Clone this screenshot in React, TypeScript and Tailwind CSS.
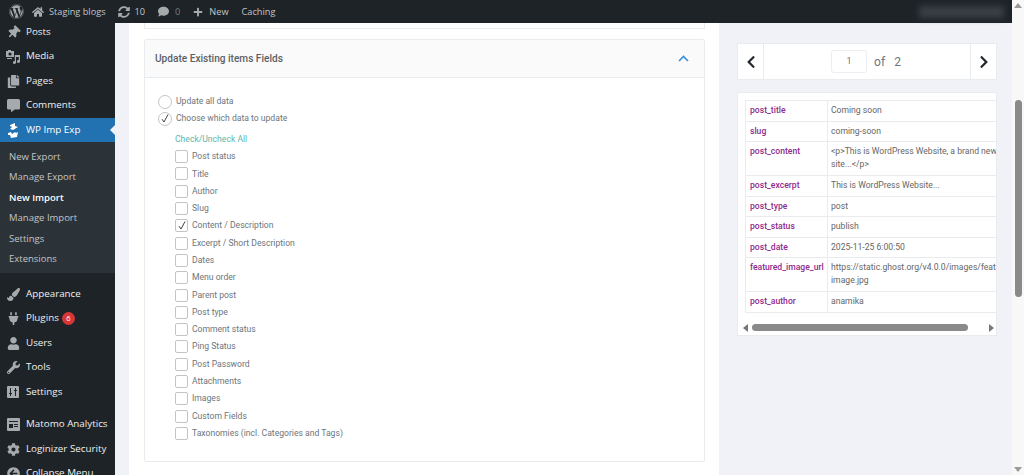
import { ReactNode } from 'react';
import {
  FaWordpress, FaHome, FaSyncAlt, FaComment, FaPlus, FaThumbtack, FaCopy, FaCommentAlt,
  FaPaintBrush, FaPlug, FaUser, FaWrench, FaCog, FaChevronLeft, FaChevronRight,
  FaArrowCircleLeft,
} from 'react-icons/fa';

const MediaIcon = () => (
  <svg width="14" height="14" viewBox="0 0 14 14" fill="currentColor">
    <path d="M0 1h8v6H0zM2 0h3v1H2z" />
    <circle cx="4" cy="4" r="1.6" fill="#1d2327" />
    <path d="M9 5h5v6.5a1.5 1.5 0 1 1-1.2-1.5V7H10v5.5A1.5 1.5 0 1 1 8.8 11V5z" />
    <path d="M1 8h5v1H1z" />
  </svg>
);

const SlidersIcon = () => (
  <svg width="12" height="12" viewBox="0 0 12 12">
    <rect width="12" height="12" rx="1" fill="currentColor" />
    <path d="M3.5 2v8M8.5 2v8M2 7.5h3M7 4.5h3" stroke="#1d2327" strokeWidth="1" />
  </svg>
);

const MatomoIcon = () => (
  <svg width="13" height="13" viewBox="0 0 13 13">
    <rect width="13" height="13" rx="1" fill="currentColor" />
    <path d="M2 3h9v1H2zM2 6h4v4H2zM7 6h4v1H7zM7 8h4v1H7z" fill="#1d2327" />
  </svg>
);

const ImpExpIcon = () => (
  <svg width="14" height="15" viewBox="0 0 14 15" fill="#fff">
    <path d="M4 2l5-2v3l3 1-5 3-3-1 2-2-2-1zM2 10l3-1 1 2 3-2 1 1 2-1-1 5-6 1-1-3-2 0z" />
  </svg>
);

const ThinCheck = () => (
  <svg width="8" height="9" viewBox="0 0 8 9" fill="none" stroke="#444" strokeWidth="1">
    <path d="M1 5.2L3 8l4-7.5" />
  </svg>
);

const MenuRow = ({ icon, label, h = 'h-[24.5px]', badge }: { icon: ReactNode; label: string; h?: string; badge?: string }) => (
  <div className={`flex items-center ${h} text-[#f0f0f1]`}>
    <div className="w-[26px] flex justify-center text-[#a7aaad] text-[13px]">{icon}</div>
    <span className="text-[9.8px] whitespace-nowrap">{label}</span>
    {badge && (
      <span className="ml-[3px] w-[13px] h-[13px] rounded-full bg-[#d63638] text-white text-[7.5px] flex items-center justify-center">
        {badge}
      </span>
    )}
  </div>
);

const Sidebar = () => (
  <aside className="w-[115px] shrink-0 bg-[#1d2327] overflow-hidden font-['Open_Sans',sans-serif]">
    <div className="-mt-[3px]">
      <MenuRow icon={<FaThumbtack className="rotate-45" />} label="Posts" />
      <MenuRow icon={<MediaIcon />} label="Media" />
      <MenuRow icon={<FaCopy />} label="Pages" />
      <MenuRow icon={<FaCommentAlt />} label="Comments" />
    </div>
    <div className="relative flex items-center h-[24px] bg-[#2271b1] text-white">
      <div className="w-[26px] flex justify-center"><ImpExpIcon /></div>
      <span className="text-[9.8px]">WP Imp Exp</span>
      <span className="absolute right-0 top-[7px] border-y-[5px] border-y-transparent border-r-[5px] border-r-[#f0f2f8]" />
    </div>
    <div className="bg-[#2c3338] h-[131px] pt-[5px] pl-[9px] text-[9.5px] text-[#c3c4c7]">
      <div className="h-[20.4px] flex items-center">New Export</div>
      <div className="h-[20.4px] flex items-center">Manage Export</div>
      <div className="h-[20.4px] flex items-center font-semibold text-white">New Import</div>
      <div className="h-[20.4px] flex items-center">Manage Import</div>
      <div className="h-[20.4px] flex items-center">Settings</div>
      <div className="h-[20.4px] flex items-center">Extensions</div>
    </div>
    <div className="mt-[9px]">
      <MenuRow icon={<FaPaintBrush />} label="Appearance" />
      <MenuRow icon={<FaPlug />} label="Plugins" badge="6" />
      <MenuRow icon={<FaUser />} label="Users" />
      <MenuRow icon={<FaWrench />} label="Tools" />
      <MenuRow icon={<SlidersIcon />} label="Settings" />
    </div>
    <div className="mt-[8px]">
      <MenuRow icon={<MatomoIcon />} label="Matomo Analytics" />
      <MenuRow icon={<FaCog />} label="Loginizer Security" />
      <MenuRow icon={<FaArrowCircleLeft />} label="Collapse Menu" />
    </div>
  </aside>
);

const AdminBar = () => (
  <header className="h-[23px] shrink-0 bg-[#1d2327] flex items-center text-[#c3c4c7] text-[9.2px] font-['Open_Sans',sans-serif]">
    <div className="w-[32px] flex justify-center text-[15px] text-[#a7aaad]"><FaWordpress /></div>
    <FaHome className="text-[12px] text-[#a7aaad]" />
    <span className="ml-[5px]">Staging blogs</span>
    <FaSyncAlt className="ml-[12px] text-[12px] text-[#a7aaad]" />
    <span className="ml-[5px]">10</span>
    <FaComment className="ml-[13px] text-[11px] text-[#a7aaad]" />
    <span className="ml-[6px] text-[#787c82]">0</span>
    <FaPlus className="ml-[13px] text-[10px] text-[#a7aaad]" />
    <span className="ml-[6px]">New</span>
    <span className="ml-[13px]">Caching</span>
    <div className="ml-auto mr-[8px] w-[85px] h-[12px] bg-[#3a3f44] blur-[3px]" />
  </header>
);

const fields = [
  'Post status', 'Title', 'Author', 'Slug', 'Content / Description', 'Excerpt / Short Description',
  'Dates', 'Menu order', 'Parent post', 'Post type', 'Comment status', 'Ping Status', 'Post Password',
  'Attachments', 'Images', 'Custom Fields', 'Taxonomies (incl. Categories and Tags)',
];

const RadioRow = ({ label, checked }: { label: string; checked?: boolean }) => (
  <div className="flex items-center h-[17px]">
    <span className="w-[14px] h-[14px] rounded-full border border-[#c4c4c4] bg-white flex items-center justify-center">
      {checked && <ThinCheck />}
    </span>
    <span className="ml-[4px]">{label}</span>
  </div>
);

const UpdateCard = () => (
  <section className="mt-[10px] h-[423px] border border-[#e9ecef] rounded-[2px]">
    <div className="h-[38px] bg-[#fafafa] border-b border-[#e9ecef] flex items-center justify-between pl-[10px] pr-[15px]">
      <span className="text-[10.1px] font-medium text-[#5a6268]">Update Existing items Fields</span>
      <svg width="11" height="7" viewBox="0 0 11 7" fill="none" stroke="#3b8fd9" strokeWidth="1.6">
        <path d="M1 6l4.5-4.5L10 6" />
      </svg>
    </div>
    <div className="pt-[15px] pl-[13px] text-[8.6px] text-[#6c757d]">
      <RadioRow label="Update all data" />
      <RadioRow label="Choose which data to update" checked />
      <div className="pl-[17px]">
        <div className="mt-[4px] h-[17px] flex items-center text-[#62b5a8]">Check/Uncheck All</div>
        {fields.map((name) => (
          <div key={name} className="flex items-center h-[17.3px]">
            <span className="w-[13px] h-[13px] rounded-[2px] border border-[#c4c4c4] flex items-center justify-center">
              {name === 'Content / Description' && <ThinCheck />}
            </span>
            <span className="ml-[4px]">{name}</span>
          </div>
        ))}
      </div>
    </div>
  </section>
);

const rows: [string, ReactNode, string][] = [
  ['post_title', 'Coming soon', 'h-[20.5px]'],
  ['slug', 'coming-soon', 'h-[20.5px]'],
  ['post_content', <>&lt;p&gt;This is WordPress Website, a brand new<br />site...&lt;/p&gt;</>, 'h-[34px]'],
  ['post_excerpt', 'This is WordPress Website...', 'h-[20.5px]'],
  ['post_type', 'post', 'h-[20.5px]'],
  ['post_status', 'publish', 'h-[20.5px]'],
  ['post_date', '2025-11-25 6:00:50', 'h-[20.5px]'],
  ['featured_image_url', <>https://static.ghost.org/v4.0.0/images/feat<br />image.jpg</>, 'h-[34px]'],
  ['post_author', 'anamika', 'h-[20.5px]'],
];

const PreviewPanel = () => (
  <div className="flex-1 min-w-0 bg-[#f0f2f8] pl-[18px] pr-[15px] pt-[20px]">
    <div className="h-[37px] bg-white border border-[#e9ecef] flex items-center text-[#6c757d]">
      <div className="w-[26px] h-full border-r border-[#e9ecef] flex items-center justify-center text-[#23282d] text-[14px]">
        <FaChevronLeft />
      </div>
      <div className="flex-1 flex items-center justify-center text-[12px]">
        <span className="w-[36px] h-[23px] border border-[#eceef1] rounded-[3px] flex items-center justify-center text-[9px]">1</span>
        <span className="ml-[7px]">of</span>
        <span className="ml-[9px] mr-[2px]">2</span>
      </div>
      <div className="w-[26px] h-full border-l border-[#e9ecef] flex items-center justify-center text-[#23282d] text-[14px]">
        <FaChevronRight />
      </div>
    </div>
    <div className="mt-[12px] h-[244px] bg-white border border-[#e9ecef] pt-[7px] pl-[7px] overflow-hidden">
      <div className="border-t border-l border-[#e9ecef] text-[8.6px]">
        {rows.map(([key, value, h]) => (
          <div key={key} className={`flex ${h} border-b border-[#e9ecef]`}>
            <div className="w-[82px] shrink-0 pl-[4px] pt-[3px] border-r border-[#e9ecef] text-[#8e2a8e] font-medium whitespace-nowrap">{key}</div>
            <div className="pl-[3px] pt-[3px] whitespace-nowrap text-[#666] leading-[13px]">{value}</div>
          </div>
        ))}
      </div>
      <div className="mt-[11px] -ml-[2px] flex items-center">
        <span className="border-y-[4px] border-y-transparent border-r-[5px] border-r-[#777]" />
        <div className="ml-[4px] w-[216px] h-[7px] rounded-full bg-[#8a8a8a]" />
        <span className="ml-[21px] border-y-[4px] border-y-transparent border-l-[5px] border-l-[#777]" />
      </div>
    </div>
  </div>
);

const PageScrollbar = () => (
  <div className="w-[12px] shrink-0 bg-[#f8f8f8] flex flex-col items-center pt-[3px]">
    <span className="border-x-[4px] border-x-transparent border-b-[5px] border-b-[#9a9a9a]" />
    <div className="mt-[92px] w-[7px] h-[197px] rounded-full bg-[#8a8a8a]" />
    <span className="mt-auto mb-[3px] border-x-[4px] border-x-transparent border-t-[5px] border-t-[#9a9a9a]" />
  </div>
);

export default function App() {
  return (
    <div className="w-[1024px] h-[475px] overflow-hidden flex font-['Roboto',sans-serif]">
      <div className="flex-1 flex flex-col min-w-0">
        <AdminBar />
        <div className="flex-1 flex min-h-0">
          <Sidebar />
          <div className="w-[14px] shrink-0 bg-[#f0f2f8]" />
          <main className="w-[590px] shrink-0 bg-white pl-[15px] pr-[14px]">
            <div className="h-[6px] border-x border-b border-[#e9ecef]" />
            <UpdateCard />
          </main>
          <PreviewPanel />
        </div>
      </div>
      <PageScrollbar />
    </div>
  );
}
